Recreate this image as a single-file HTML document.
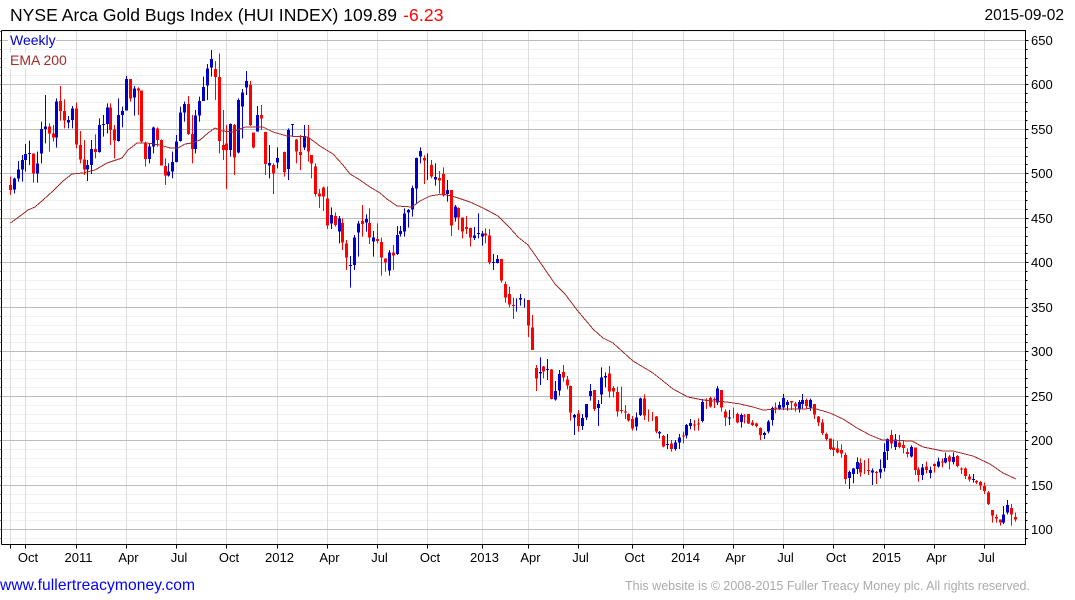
<!DOCTYPE html>
<html>
<head>
<meta charset="utf-8">
<title>NYSE Arca Gold Bugs Index</title>
<style>
html,body{margin:0;padding:0;background:#fff;width:1075px;height:600px;overflow:hidden}
svg{display:block;font-family:"Liberation Sans",Arial,sans-serif}
.c{fill:none;shape-rendering:crispEdges}
.rw{stroke:#ff0000;stroke-width:1}
.rb{stroke:#ff0000;stroke-width:3}
.bw{stroke:#0000cc;stroke-width:1}
.bb{stroke:#0000cc;stroke-width:3}
.x{font-size:13px;fill:#000;text-anchor:middle}
.y{font-size:13px;fill:#000}
</style>
</head>
<body>
<svg width="1075" height="600" viewBox="0 0 1075 600" xmlns="http://www.w3.org/2000/svg">
<rect width="1075" height="600" fill="#fff"/>
<!-- minor horizontal grid -->
<g class="c" transform="translate(0,.5)">
<path stroke="#f0f0f0" d="M2 31H1025M2 49H1025M2 58H1025M2 67H1025M2 75H1025M2 93H1025M2 102H1025M2 111H1025M2 120H1025M2 138H1025M2 147H1025M2 156H1025M2 164H1025M2 182H1025M2 191H1025M2 200H1025M2 209H1025M2 227H1025M2 236H1025M2 245H1025M2 253H1025M2 271H1025M2 280H1025M2 289H1025M2 298H1025M2 316H1025M2 325H1025M2 334H1025M2 342H1025M2 360H1025M2 369H1025M2 378H1025M2 387H1025M2 405H1025M2 414H1025M2 423H1025M2 431H1025M2 449H1025M2 458H1025M2 467H1025M2 476H1025M2 494H1025M2 503H1025M2 512H1025M2 520H1025M2 538H1025"/>
</g>
<!-- vertical grid -->
<g class="c" transform="translate(.5,0)">
<path stroke="#dddddd" d="M10 30V544M25 30V544M76 30V544M126 30V544M176 30V544M226 30V544M277 30V544M327 30V544M377 30V544M427 30V544M482 30V544M528 30V544M578 30V544M632 30V544M683 30V544M733 30V544M783 30V544M833 30V544M884 30V544M934 30V544M984 30V544"/>
</g>
<!-- major horizontal grid -->
<g class="c" transform="translate(0,.5)">
<path stroke="#bbbbbb" d="M2 40H1025M2 84H1025M2 129H1025M2 173H1025M2 218H1025M2 262H1025M2 307H1025M2 351H1025M2 396H1025M2 440H1025M2 485H1025M2 529H1025"/>
</g>
<!-- legend -->
<rect x="8" y="33" width="48" height="14" fill="#fff"/>
<rect x="8" y="53" width="60" height="15" fill="#fff"/>
<text x="10" y="45" font-size="14" fill="#0000cc">Weekly</text>
<text x="10" y="65" font-size="14" fill="#a52a2a">EMA 200</text>

<!-- candles zone A -->
<g class="c" transform="translate(.5,0) scale(1,.33333)">
<path class="rw" d="M10 530V585M33 460V548M49 370V455M53 375V425M60 258V362M64 298V385M76 308V445M80 393V490M84 420V525M95 403V475M110 310V435M114 375V475M130 237V305M138 262V345M141 272V430M145 425V500M157 382V440M161 418V497M165 475V555M188 288V405M192 345V490M215 183V300M219 160V460M223 330V480M226 375V567M234 372V525M250 243V378M253 398V445M261 315V390M265 395V525M273 490V582M284 455V530M296 417V490M300 405V510M308 375V485M311 465V535M315 490V590M319 567V624M323 560V633M327 560V687M335 637V680M342 655V750M346 720V810"/>
<path class="rb" d="M10 555V570M33 460V520M49 380V400M53 400V413M60 303V333M64 333V362M76 325V433M80 435V478M84 478V508M95 447V456M110 323V390M114 388V422M130 237V295M138 265V272M141 272V425M145 427V477M157 385V420M161 420V497M165 498V527M188 312V402M192 402V447M215 207V231M219 231V423M223 435V450M226 430V450M234 375V473M250 255V375M253 398V443M261 345V356M265 396V492M273 495V521M284 456V516M296 418V455M300 456V465M308 412V455M311 465V491M315 500V582M319 580V590M323 562V590M327 595V677M335 648V675M342 669V728M346 730V773"/>
<path class="bw" d="M14 533V580M18 483V545M22 465V545M25 432V515M29 422V495M37 455V548M41 365V490M45 285V430M56 295V443M68 348V385M72 318V385M87 480V543M91 420V522M99 355V458M103 345V410M107 310V400M118 295V425M122 320V382M126 228V332M134 258V347M149 430V490M153 380V460M168 490V530M172 455V535M176 405V487M180 320V425M184 305V365M195 330V460M199 290V365M203 230V300M207 192V300M211 150V230M230 370V470M238 295V460M242 267V415M246 213V285M257 318V395M269 435V535M277 442V505M288 385V540M292 372V410M304 375V450M331 622V687M339 648V730M350 768V863M354 705V810M358 663V770"/>
<path class="bb" d="M14 535V568M18 508V535M22 480V508M25 462V480M29 459V462M37 490V520M41 387V460M45 380V387M56 305V413M68 360V368M72 325V360M87 495V508M91 447V495M99 375V456M103 372V375M107 323V372M118 345V423M122 333V345M126 237V332M134 265V293M149 440V477M153 383V440M168 515V527M172 486V515M176 425V486M180 338V423M184 312V338M195 347V447M199 303V347M203 261V303M207 205V257M211 177V203M230 372V450M238 300V458M242 278V320M246 243V262M257 345V395M269 489V497M277 474V487M288 390V507M292 372V375M304 408V443M331 645V670M339 655V695M350 795V798M354 712V795M358 670V698"/>
</g>
<!-- candles zone B -->
<g class="c" transform="translate(.5,130) scale(1,.33333)">
<path class="rw" d="M362 225V320M369 235V342M377 280V340M381 323V437M385 385V425M393 345V420M424 76V162M431 90V145M439 123V190M443 112V200M451 180V318M458 232V300M462 263V325M466 258V312M470 293V350M485 295V340M489 297V403M501 387V458M505 455V518M509 470V532M513 503V567M528 510V621M532 555V660"/>
<path class="rb" d="M362 273V282M369 279V323M377 327V333M381 336V383M385 385V398M393 367V377M424 84V92M431 105V140M439 144V152M443 132V196M451 180V287M458 234V262M462 263V305M466 291V297M470 294V322M485 310V317M489 316V398M501 387V452M505 462V503M509 492V524M513 525V528M528 510V587M532 592V660"/>
<path class="bw" d="M366 253V305M373 303V380M389 360V437M397 288V375M400 288V320M404 235V320M408 237V293M412 167V260M416 83V220M420 52V100M427 70V150M435 100V167M447 150V215M455 225V275M474 291V330M478 250V325M482 303V347M493 372V420M497 375V400M516 505V545M520 492V527M524 505V533"/>
<path class="bb" d="M366 267V278M373 323V335M389 367V422M397 315V372M400 303V312M404 250V305M408 240V248M412 174V238M416 84V176M420 63V80M435 141V149M447 180V192M455 229V262M474 316V324M478 309V312M482 310V320M493 396V399M497 387V399M520 504V509"/>
</g>
<!-- candles zone C -->
<g class="c" transform="translate(.5,330) scale(1,.33333)">
<path class="rw" d="M536 105V183M543 108V145M551 117V208M563 105V155M567 138V178M570 167V272M578 240V305M594 180V243M609 108V203M613 168V202M617 170V260M621 170V250M625 225V267M628 250V275M632 258V302M644 193V270M648 238V275M652 246V273M656 258V310M663 315V352M671 330V365M683 305V340M694 270V302M698 265V302M706 205V237M710 200V233M714 202V234M721 180V245M725 238V288M733 233V265M737 248V280M744 252V280M748 252V282M752 270V288M756 278V292M760 292V330M775 217V250"/>
<path class="rb" d="M536 114V146M543 110V125M551 118V207M563 126V143M567 148V167M570 168V248M578 250V288M594 180V237M609 130V185M613 174V185M617 186V245M621 240V243M625 244V248M628 252V272M632 267V296M644 205V257M656 259V305M663 318V350M671 340V357M683 316V319M694 283V286M698 280V283M706 210V213M710 204V230M714 207V210M721 180V233M725 244V263M737 252V278M744 256V260M748 252V280M752 278V285M756 280V288M760 294V315M775 232V235"/>
<path class="bw" d="M540 82V165M547 87V150M555 153V212M559 120V197M574 252V315M582 252V300M586 222V270M590 162V212M598 210V288M601 112V222M605 127V172M636 247V302M640 203V258M659 303V325M667 312V357M675 330V362M679 312V357M686 282V325M690 267V298M702 207V277M717 168V225M729 240V285M741 250V293M764 305V327M768 270V310M772 230V287M779 215V240"/>
<path class="bb" d="M540 126V131M547 117V120M555 183V208M559 132V182M574 255V263M582 264V288M586 222V263M590 183V198M598 222V234M601 142V194M605 138V143M636 262V290M640 205V255M659 306V311M667 342V345M675 337V357M679 322V338M686 285V317M690 279V288M702 216V273M717 175V218M729 262V265M741 255V276M764 309V315M768 274V305M772 234V270M779 225V238"/>
</g>
<!-- candles zone D -->
<g class="c" transform="translate(.5,380) scale(1,.33333)">
<path class="rw" d="M791 63V90M795 66V95M806 56V85M814 72V117M818 108V138M822 117V165M826 158V182M830 175V210M833 178V228M837 183V220M841 193V233M845 218V312M860 235V290M864 240V282M868 235V285M876 273V312M891 150V205M899 165V205M903 183V220M907 205V232M915 203V285M918 262V305M926 245V280M934 250V278M942 235V262M949 225V268M957 225V262M961 262V282M965 262V297M969 282V305M976 300V312M980 303V330M984 308V342M988 333V375M992 390V428M996 403V428M1000 418V437M1011 372V437M1015 398V425"/>
<path class="rb" d="M791 63V68M795 71V80M806 60V78M814 72V104M818 110V128M822 128V159M826 162V177M830 175V207M833 203V210M837 205V217M841 210V221M845 225V297M860 249V278M868 270V273M876 276V279M891 165V190M899 187V201M903 195V204M907 216V222M915 203V270M918 268V285M926 260V270M934 252V258M942 245V248M949 229V245M957 228V258M961 265V268M965 265V288M969 290V299M976 303V308M980 306V317M984 318V333M988 338V372M992 390V407M996 411V416M1000 418V428M1011 384V404M1015 411V419"/>
<path class="bw" d="M783 42V90M787 60V92M799 60V98M802 42V85M810 56V93M849 272V327M853 264V310M857 232V282M872 265V315M880 238V295M884 190V275M887 175V240M895 162V210M911 196V232M922 252V300M930 260V295M938 233V263M945 218V250M953 217V253M973 282V308M1003 378V432M1007 360V403"/>
<path class="bb" d="M783 54V82M787 66V75M799 66V85M802 60V72M810 60V82M849 276V294M853 265V282M857 246V267M872 272V278M880 267V278M884 216V264M887 177V213M895 178V201M911 201V229M922 262V285M930 270V279M938 244V260M945 234V247M953 231V246M973 297V300M1003 403V428M1007 375V398"/>
</g>

<!-- EMA 200 -->
<polyline fill="none" stroke="#a52a2a" stroke-width="1" shape-rendering="crispEdges" points="10.5,223 20,216 28,210 35,207 43,200 53,191 58,186 63,181 72,174 83,173 95,170 107,163 122,158 128,150 137,143 147,143 160,145 170,148 178,148 185,144 192,143 200,140 208,133 215,128 222,131 233,132 245,127 253,127 263,127 273,132 287,136 308,137 320,146 333,154 343,165 350,174 360,180 370,187 380,193 387,199 397,206 412,207 420,201 430,196 443,194 455,197 470,202 483,208 498,216 510,228 518,237 528,245 542,265 555,284 565,294 577,310 593,329 603,338 613,343 633,361 653,373 673,389 688,397 703,400 727,402 740,404 753,407 763,410 780,409 805,409 813,408 830,413 843,419 857,428 870,435 882,440 912,441 923,447 943,451 953,451 973,456 990,464 1003,473 1016,479"/>

<!-- frame -->
<g class="c" transform="translate(.5,.5)">
<path stroke="#000" d="M1 30H1025V544H1M1 30V544"/>
<!-- left ticks -->
<path stroke="#000" d="M0 31H1M0 40H1M0 49H1M0 58H1M0 67H1M0 75H1M0 84H1M0 93H1M0 102H1M0 111H1M0 120H1M0 129H1M0 138H1M0 147H1M0 156H1M0 164H1M0 173H1M0 182H1M0 191H1M0 200H1M0 209H1M0 218H1M0 227H1M0 236H1M0 245H1M0 253H1M0 262H1M0 271H1M0 280H1M0 289H1M0 298H1M0 307H1M0 316H1M0 325H1M0 334H1M0 342H1M0 351H1M0 360H1M0 369H1M0 378H1M0 387H1M0 396H1M0 405H1M0 414H1M0 423H1M0 431H1M0 440H1M0 449H1M0 458H1M0 467H1M0 476H1M0 485H1M0 494H1M0 503H1M0 512H1M0 520H1M0 529H1M0 538H1"/>
<!-- right ticks -->
<path stroke="#000" d="M1025 40H1028M1025 84H1028M1025 129H1028M1025 173H1028M1025 218H1028M1025 262H1028M1025 307H1028M1025 351H1028M1025 396H1028M1025 440H1028M1025 485H1028M1025 529H1028"/>
<path stroke="#000" d="M1025 49H1027M1025 58H1027M1025 67H1027M1025 75H1027M1025 93H1027M1025 102H1027M1025 111H1027M1025 120H1027M1025 138H1027M1025 147H1027M1025 156H1027M1025 164H1027M1025 182H1027M1025 191H1027M1025 200H1027M1025 209H1027M1025 227H1027M1025 236H1027M1025 245H1027M1025 253H1027M1025 271H1027M1025 280H1027M1025 289H1027M1025 298H1027M1025 316H1027M1025 325H1027M1025 334H1027M1025 342H1027M1025 360H1027M1025 369H1027M1025 378H1027M1025 387H1027M1025 405H1027M1025 414H1027M1025 423H1027M1025 431H1027M1025 449H1027M1025 458H1027M1025 467H1027M1025 476H1027M1025 494H1027M1025 503H1027M1025 512H1027M1025 520H1027M1025 538H1027"/>
<!-- bottom ticks -->
<path stroke="#000" d="M10 544V548M25 544V548M76 544V548M126 544V548M176 544V548M226 544V548M277 544V548M327 544V548M377 544V548M427 544V548M482 544V548M528 544V548M578 544V548M632 544V548M683 544V548M733 544V548M783 544V548M833 544V548M884 544V548M934 544V548M984 544V548"/>
</g>

<!-- title -->
<text x="10" y="21" font-size="17.5" fill="#000" textLength="387" lengthAdjust="spacing">NYSE Arca Gold Bugs Index (HUI INDEX) 109.89</text>
<text x="403" y="21" font-size="17.5" fill="#ff0000" textLength="40.5" lengthAdjust="spacing">-6.23</text>
<text x="984.5" y="20" font-size="15.5" fill="#000" textLength="79.5" lengthAdjust="spacing">2015-09-02</text>

<!-- y labels -->
<g class="y">
<text x="1031" y="45">650</text>
<text x="1031" y="89">600</text>
<text x="1031" y="134">550</text>
<text x="1031" y="178">500</text>
<text x="1031" y="223">450</text>
<text x="1031" y="267">400</text>
<text x="1031" y="312">350</text>
<text x="1031" y="356">300</text>
<text x="1031" y="401">250</text>
<text x="1031" y="445">200</text>
<text x="1031" y="490">150</text>
<text x="1031" y="534">100</text>
</g>
<!-- x labels -->
<g class="x">
<text x="28" y="562">Oct</text>
<text x="78.5" y="562">2011</text>
<text x="128.5" y="562">Apr</text>
<text x="179" y="562">Jul</text>
<text x="229" y="562">Oct</text>
<text x="279.5" y="562">2012</text>
<text x="329.5" y="562">Apr</text>
<text x="379.5" y="562">Jul</text>
<text x="430" y="562">Oct</text>
<text x="484.5" y="562">2013</text>
<text x="530.5" y="562">Apr</text>
<text x="580.5" y="562">Jul</text>
<text x="634.5" y="562">Oct</text>
<text x="685.5" y="562">2014</text>
<text x="735.5" y="562">Apr</text>
<text x="785.5" y="562">Jul</text>
<text x="836" y="562">Oct</text>
<text x="886.5" y="562">2015</text>
<text x="936.5" y="562">Apr</text>
<text x="986.5" y="562">Jul</text>
</g>
<!-- footer -->
<text x="0" y="590" font-size="15.6" fill="#0000ff" textLength="195" lengthAdjust="spacing">www.fullertreacymoney.com</text>
<text x="625" y="590" font-size="12.5" fill="#aaaaaa" textLength="405" lengthAdjust="spacing">This website is © 2008-2015 Fuller Treacy Money plc. All rights reserved.</text>
</svg>
</body>
</html>
